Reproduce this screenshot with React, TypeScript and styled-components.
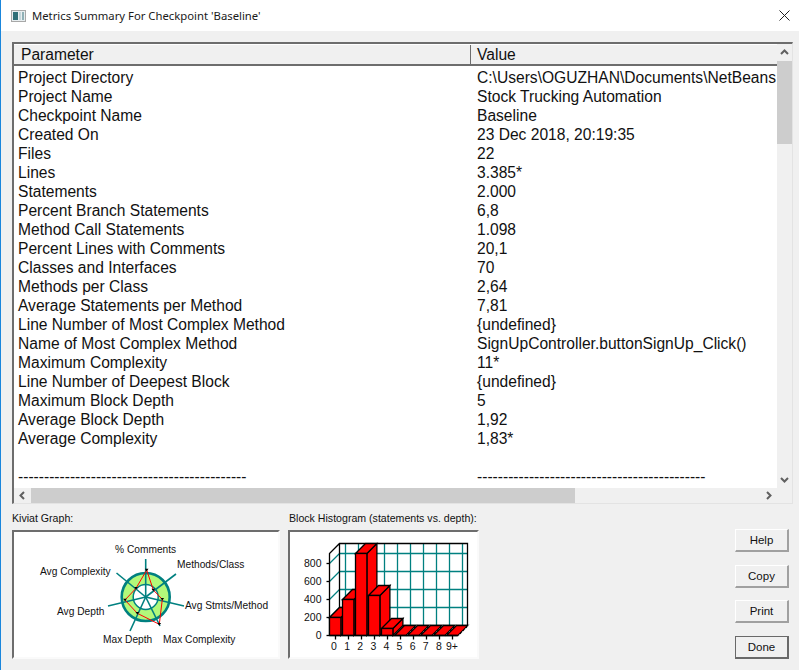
import React from "react";
import styled, { createGlobalStyle } from "styled-components";

const metrics: [string, string][] = [
  ["Project Directory", "C:\\Users\\OGUZHAN\\Documents\\NetBeans"],
  ["Project Name", "Stock Trucking Automation"],
  ["Checkpoint Name", "Baseline"],
  ["Created On", "23 Dec 2018, 20:19:35"],
  ["Files", "22"],
  ["Lines", "3.385*"],
  ["Statements", "2.000"],
  ["Percent Branch Statements", "6,8"],
  ["Method Call Statements", "1.098"],
  ["Percent Lines with Comments", "20,1"],
  ["Classes and Interfaces", "70"],
  ["Methods per Class", "2,64"],
  ["Average Statements per Method", "7,81"],
  ["Line Number of Most Complex Method", "{undefined}"],
  ["Name of Most Complex Method", "SignUpController.buttonSignUp_Click()"],
  ["Maximum Complexity", "11*"],
  ["Line Number of Deepest Block", "{undefined}"],
  ["Maximum Block Depth", "5"],
  ["Average Block Depth", "1,92"],
  ["Average Complexity", "1,83*"],
  ["", ""],
  ["-".repeat(44), "-".repeat(44)],
];

const Arrow = ({ d }: { d: string }) => (
  <svg width="9" height="9" viewBox="0 0 9 9">
    <path d={d} fill="none" stroke="#606060" strokeWidth="2" />
  </svg>
);

const WindowIcon = () => (
  <svg width="15" height="14" viewBox="0 0 15 14">
    <rect x="0.5" y="1.5" width="14" height="11" fill="#e8eef0" stroke="#a8a8a8" />
    <rect x="2" y="3" width="5" height="8" fill="#2f6f78" />
    <rect x="8" y="3" width="2" height="8" fill="#c4d6da" />
    <rect x="11" y="3" width="2" height="8" fill="#8fb0b6" />
  </svg>
);

const CloseIcon = () => (
  <svg width="11" height="11" viewBox="0 0 11 11">
    <path d="M0.5 0.5 L10.5 10.5 M10.5 0.5 L0.5 10.5" stroke="#222" strokeWidth="1" />
  </svg>
);

const KiviatGraph = () => {
  const cx = 145.7;
  const cy = 596;
  const spokes = [
    [145.7, 558],
    [176, 573],
    [184, 605],
    [160, 625],
    [130, 630],
    [108, 605],
    [116.5, 572],
  ];
  const marks = [
    [146.7, 569],
    [153.3, 589],
    [162.3, 598.3],
    [159.3, 623.3],
    [137.3, 612.3],
    [125, 599],
    [136, 587.3],
  ];
  const labels: [string, number, number][] = [
    ["% Comments", 115, 552],
    ["Methods/Class", 177, 567],
    ["Avg Stmts/Method", 185, 608],
    ["Max Complexity", 163, 642],
    ["Max Depth", 103, 642],
    ["Avg Depth", 57, 614],
    ["Avg Complexity", 40, 574],
  ];
  return (
    <svg width="264" height="125" viewBox="14 531 264 125">
      <circle cx={cx} cy={cy} r="24" fill="#b2f97a" stroke="#008080" strokeWidth="2.6" />
      <circle cx={cx} cy={cy} r="12.5" fill="#fff" stroke="#008080" strokeWidth="1.5" />
      {spokes.map(([x, y], i) => (
        <line key={i} x1={cx} y1={cy} x2={x} y2={y} stroke="#008080" strokeWidth="1.6" />
      ))}
      <polygon points={marks.map((m) => m.join(",")).join(" ")} fill="none" stroke="#f00" strokeWidth="1" />
      {marks.map(([x, y], i) => (
        <polygon key={i} points={`${x - 1.8},${y - 1.3} ${x + 1.8},${y - 1.3} ${x},${y + 1.2}`} fill="#000" />
      ))}
      {labels.map(([t, x, y]) => (
        <text key={t} x={x} y={y} fontFamily="Liberation Sans, sans-serif" fontSize="10.2" fill="#111">
          {t}
        </text>
      ))}
    </svg>
  );
};

const BlockHistogram = () => {
  const tops = [616, 598, 552, 594, 627, 634, 634, 634, 634, 634];
  const dx = 10;
  const dy = 10;
  const w = 11.4;
  const backX = Array.from({ length: 10 }, (_, i) => 345 + i * 13);
  const backY = [552, 570, 588, 606];
  return (
    <svg width="187" height="125" viewBox="290 531 187 125">
      <defs>
        <clipPath id="wall">
          <rect x="320" y="541" width="160" height="101" />
        </clipPath>
      </defs>
      <g transform="translate(0.5 0.5)" strokeWidth="1.3" fill="none">
        {backX.map((x) => (
          <line key={x} x1={x} y1="542" x2={x} y2="624" stroke="#008080" />
        ))}
        {backY.map((y) => (
          <g key={y} stroke="#008080">
            <line x1="339" y1={y} x2="467" y2={y} />
            <line x1="329" y1={y + 10} x2="339" y2={y} />
          </g>
        ))}
        <path d="M329 634 L329 552 L339 542 L467 542 L467 624 L339 624 L339 542" stroke="#000" />
        <g clipPath="url(#wall)" stroke="#000" fill="#f00">
          {tops.map((top, i) => {
            const x = 329 + i * 13;
            return (
              <g key={i}>
                <polygon points={`${x + w},${top} ${x + w + dx},${top - dy} ${x + w + dx},${634 - dy} ${x + w},634`} />
                <polygon points={`${x},${top} ${x + dx},${top - dy} ${x + w + dx},${top - dy} ${x + w},${top}`} />
                {top < 634 && <rect x={x} y={top} width={w} height={634 - top} />}
                {top === 634 && (
                  <line x1={x + w + 1} y1="634" x2={x + w + 1 + dx} y2="624" stroke="#fff" strokeDasharray="2 2" strokeWidth="1" />
                )}
              </g>
            );
          })}
        </g>
        <line x1="329" y1="634" x2="457" y2="634" stroke="#000" />
        {[0, 1, 2, 3, 4].map((i) => (
          <line key={i} x1="326" y1={634 - i * 18} x2="329" y2={634 - i * 18} stroke="#000" />
        ))}
        {backX.map((x, i) => (
          <line key={i} x1={335 + i * 13} y1="634" x2={335 + i * 13} y2="638" stroke="#000" />
        ))}
      </g>
      {["0", "200", "400", "600", "800"].map((t, i) => (
        <text key={t} x="321.5" y={638 - i * 18} textAnchor="end" fontFamily="Liberation Sans, sans-serif" fontSize="10.5" fill="#111">
          {t}
        </text>
      ))}
      {["0", "1", "2", "3", "4", "5", "6", "7", "8", "9+"].map((t, i) => (
        <text key={t} x={334 + i * 13.1} y="649" textAnchor="middle" fontFamily="Liberation Sans, sans-serif" fontSize="10.5" fill="#111">
          {t}
        </text>
      ))}
    </svg>
  );
};

export default function App() {
  return (
    <>
      <GlobalStyle />
      <Window>
        <TitleBar>
          <WindowIcon />
          <Title>Metrics Summary For Checkpoint 'Baseline'</Title>
          <CloseButton>
            <CloseIcon />
          </CloseButton>
        </TitleBar>
        <Body>
          <Frame>
            <ListArea>
              <HeaderRow>
                <HeaderCell $width={457}>Parameter</HeaderCell>
                <HeaderCell>Value</HeaderCell>
              </HeaderRow>
              <Rows>
                {metrics.map(([name, value], i) => (
                  <Row key={i}>
                    <NameCell>{name}</NameCell>
                    <ValueCell>{value}</ValueCell>
                  </Row>
                ))}
              </Rows>
            </ListArea>
            <VScroll>
              <ScrollButton>
                <Arrow d="M1 6 L4.5 2.5 L8 6" />
              </ScrollButton>
              <VThumb />
              <VSpace />
              <ScrollButton>
                <Arrow d="M1 3 L4.5 6.5 L8 3" />
              </ScrollButton>
            </VScroll>
            <HScroll>
              <HButton>
                <Arrow d="M6 1 L2.5 4.5 L6 8" />
              </HButton>
              <HThumb />
              <VSpace />
              <HButton>
                <Arrow d="M3 1 L6.5 4.5 L3 8" />
              </HButton>
            </HScroll>
            <Corner />
          </Frame>
          <Bottom>
            <GraphGroup>
              <GraphLabel>Kiviat Graph:</GraphLabel>
              <GraphPanel $width={268}>
                <KiviatGraph />
              </GraphPanel>
            </GraphGroup>
            <GraphGroup>
              <GraphLabel $inset={1}>Block Histogram (statements vs. depth):</GraphLabel>
              <GraphPanel $width={191}>
                <BlockHistogram />
              </GraphPanel>
            </GraphGroup>
            <ButtonColumn>
              <DialogButton>Help</DialogButton>
              <DialogButton>Copy</DialogButton>
              <DialogButton>Print</DialogButton>
              <DialogButton $isDefault>Done</DialogButton>
            </ButtonColumn>
          </Bottom>
        </Body>
      </Window>
    </>
  );
}

const GlobalStyle = createGlobalStyle`
  html, body {
    margin: 0;
    padding: 0;
    background: #f0f0f0;
  }
`;

const Window = styled.div`
  width: 799px;
  height: 670px;
  box-sizing: border-box;
  border-left: 1px solid #1a86dc;
  background: #f0f0f0;
  overflow: hidden;
  font-family: "Liberation Sans", Arial, sans-serif;
  color: #111;
`;

const TitleBar = styled.div`
  height: 31px;
  background: #fff;
  display: flex;
  align-items: center;
  padding: 0 9px 0 10px;
`;

const Title = styled.div`
  margin-left: 6px;
  font-family: "Noto Sans", sans-serif;
  font-size: 11.3px;
  color: #1a1a1a;
  flex: 1;
`;

const CloseButton = styled.div`
  display: flex;
  align-items: center;
`;

const Body = styled.div`
  padding: 11px 6px 0 11px;
`;

const Frame = styled.div`
  box-sizing: border-box;
  height: 462px;
  display: grid;
  grid-template-columns: 1fr 15px;
  grid-template-rows: 1fr 15px;
  border-top: 2px solid #6d6d6d;
  border-left: 2px solid #6d6d6d;
  border-right: 1px solid #e3e3e3;
  border-bottom: 1px solid #e3e3e3;
`;

const ListArea = styled.div`
  background: #fff;
  overflow: hidden;
  min-width: 0;
`;

const HeaderRow = styled.div`
  display: flex;
  box-sizing: border-box;
  height: 22px;
  background: #f0f0f0;
  border-top: 1px solid #fff;
  border-bottom: 2px solid #6d6d6d;
`;

const HeaderCell = styled.div<{ $width?: number }>`
  box-sizing: border-box;
  width: ${(p) => (p.$width ? `${p.$width}px` : "auto")};
  padding: 1px 0 0 ${(p) => (p.$width ? "7px" : "6px")};
  border-right: ${(p) => (p.$width ? "1px solid #6d6d6d" : "none")};
  font-size: 15.6px;
  line-height: 18px;
`;

const Rows = styled.div`
  padding-top: 2px;
`;

const Row = styled.div`
  display: flex;
  height: 19px;
  font-size: 15.6px;
  line-height: 19px;
  white-space: nowrap;
`;

const NameCell = styled.div`
  width: 459px;
  padding-left: 4px;
  flex-shrink: 0;
  box-sizing: border-box;
  overflow: hidden;
`;

const ValueCell = styled.div`
  padding-left: 4px;
`;

const VScroll = styled.div`
  display: flex;
  flex-direction: column;
  background: #f0f0f0;
`;

const ScrollButton = styled.div`
  height: 17px;
  display: flex;
  align-items: center;
  justify-content: center;
  flex-shrink: 0;
`;

const VThumb = styled.div`
  height: 83px;
  background: #cdcdcd;
`;

const VSpace = styled.div`
  flex: 1;
`;

const HScroll = styled.div`
  display: flex;
  background: #f0f0f0;
`;

const HButton = styled.div`
  width: 17px;
  display: flex;
  align-items: center;
  justify-content: center;
  flex-shrink: 0;
`;

const HThumb = styled.div`
  width: 544px;
  background: #cdcdcd;
`;

const Corner = styled.div`
  background: #f0f0f0;
`;

const Bottom = styled.div`
  display: flex;
  align-items: flex-end;
  gap: 8px;
  height: 155px;
  padding-right: 4px;
`;

const GraphGroup = styled.div`
  display: flex;
  flex-direction: column;
`;

const GraphLabel = styled.div<{ $inset?: number }>`
  font-size: 10.6px;
  line-height: 17px;
  height: 20px;
  margin-left: ${(p) => p.$inset ?? 0}px;
  white-space: nowrap;
`;

const GraphPanel = styled.div<{ $width: number }>`
  box-sizing: border-box;
  width: ${(p) => p.$width}px;
  height: 129px;
  background: #fff;
  border-top: 2px solid #6d6d6d;
  border-left: 2px solid #6d6d6d;
  border-right: 2px solid #fafafa;
  border-bottom: 2px solid #fafafa;
  svg {
    display: block;
  }
`;

const ButtonColumn = styled.div`
  margin-left: auto;
  width: 54px;
  height: 130px;
  display: flex;
  flex-direction: column;
  justify-content: space-between;
`;

const DialogButton = styled.div<{ $isDefault?: boolean }>`
  box-sizing: border-box;
  height: 23px;
  background: #f0f0f0;
  display: flex;
  align-items: center;
  justify-content: center;
  font-size: 11.5px;
  border-style: solid;
  border-width: 1px 2px 2px 1px;
  border-color: ${(p) => (p.$isDefault ? "#696969" : "#fff #a0a0a0 #a0a0a0 #fff")};
`;
